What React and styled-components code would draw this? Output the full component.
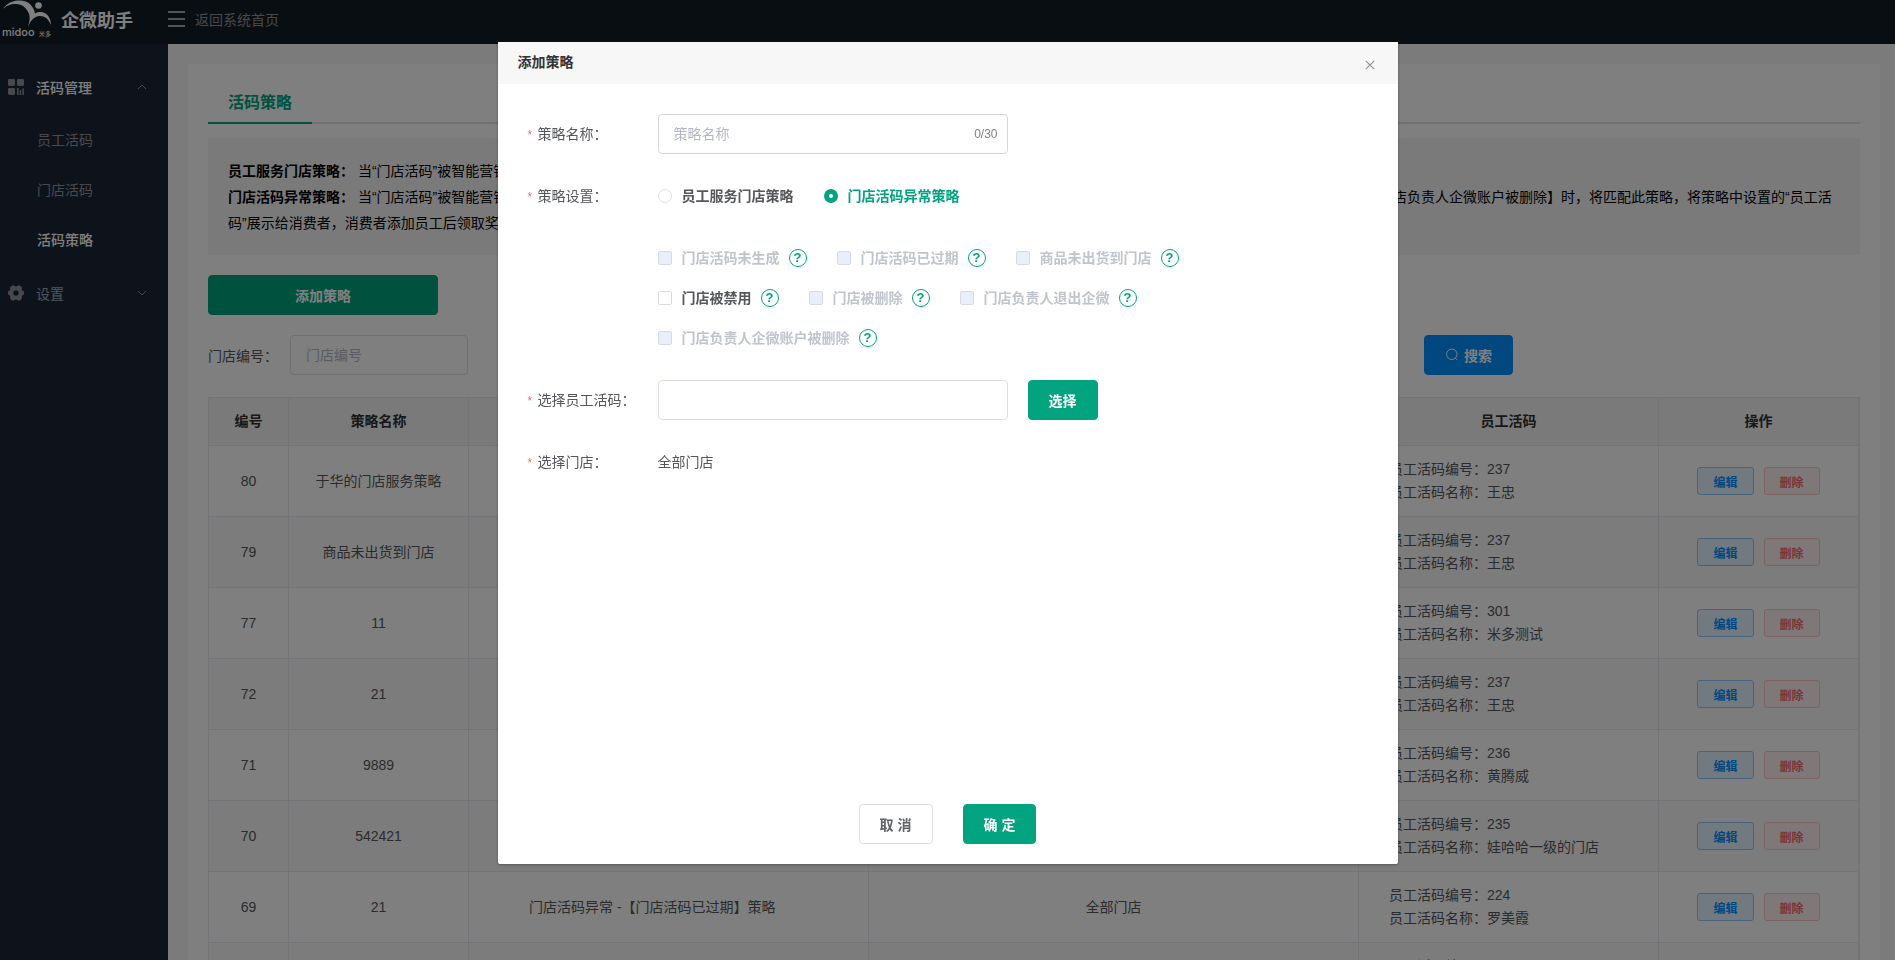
import React, { useState } from "react";
import styled, { createGlobalStyle, css } from "styled-components";

const GREEN = "#02a37f";

const rows = [
  { id: 80, name: "于华的门店服务策略", type: "员工服务门店策略", store: "全部门店", codeId: 237, codeName: "王忠" },
  { id: 79, name: "商品未出货到门店", type: "门店活码异常 -【商品未出货到门店】策略", store: "全部门店", codeId: 237, codeName: "王忠" },
  { id: 77, name: "11", type: "门店活码异常 -【门店被删除】策略", store: "全部门店", codeId: 301, codeName: "米多测试" },
  { id: 72, name: "21", type: "门店活码异常 -【门店活码未生成】策略", store: "全部门店", codeId: 237, codeName: "王忠" },
  { id: 71, name: "9889", type: "员工服务门店策略", store: "全部门店", codeId: 236, codeName: "黄腾威" },
  { id: 70, name: "542421", type: "员工服务门店策略", store: "全部门店", codeId: 235, codeName: "娃哈哈一级的门店" },
  { id: 69, name: "21", type: "门店活码异常 -【门店活码已过期】策略", store: "全部门店", codeId: 224, codeName: "罗美霞" },
  { id: 68, name: "21", type: "员工服务门店策略", store: "全部门店", codeId: 224, codeName: "罗美霞" },
];

const filters = ["门店编号", "门店名称", "策略名称", "员工活码"];

const conditions = [
  [
    { label: "门店活码未生成", disabled: true },
    { label: "门店活码已过期", disabled: true },
    { label: "商品未出货到门店", disabled: true },
  ],
  [
    { label: "门店被禁用", disabled: false },
    { label: "门店被删除", disabled: true },
    { label: "门店负责人退出企微", disabled: true },
  ],
  [{ label: "门店负责人企微账户被删除", disabled: true }],
];

function Logo() {
  return (
    <svg width="50" height="38" viewBox="0 0 50 38" role="img" aria-label="midoo 米多">
      <g fill="#ffffff">
        <path d="M1 9 C5 2.5 12 0 19 0.5 C27 1 32 7 33 13.5 C41 9 49 15 49 25 C46 18 42 15.5 37 16 C31 17 28 22 26 27 C27 23 28.5 19 27 14 C25 8 20 4 14 4 C8 4 4 6 1 9 Z" />
        <circle cx="36.5" cy="5.5" r="3.3" />
        <text x="0" y="36" fontFamily="Inter, sans-serif" fontSize="11" fontWeight="500">midoo</text>
        <text x="37" y="36" fontFamily="Noto Sans CJK SC, sans-serif" fontSize="6">米多</text>
      </g>
    </svg>
  );
}

function GridIcon() {
  return (
    <svg width="16" height="16" viewBox="0 0 16 16" fill="#909399">
      <rect x="0" y="0" width="7" height="7" rx="1.4" />
      <rect x="9" y="0" width="7" height="7" rx="1.4" />
      <rect x="0" y="9" width="7" height="7" rx="1.4" />
      <rect x="9" y="9" width="1.5" height="7" />
      <rect x="11.7" y="11" width="1.5" height="5" />
      <rect x="14.4" y="9.5" width="1.5" height="6.5" />
    </svg>
  );
}

function GearIcon() {
  return (
    <svg width="16" height="16" viewBox="0 0 16 16">
      <path
        fill="#909399"
        fillRule="evenodd"
        d="M4.5 0.4 Q5.5 0 6.2 0.8 Q8 2.4 9.8 0.8 Q10.5 0 11.5 0.4 L13.2 1.4 Q14 2 13.7 3.2 Q13.4 5.8 15.2 6 Q16 6.3 16 7.2 V8.8 Q16 9.7 15.2 10 Q13.4 10.2 13.7 12.8 Q14 14 13.2 14.6 L11.5 15.6 Q10.5 16 9.8 15.2 Q8 13.6 6.2 15.2 Q5.5 16 4.5 15.6 L2.8 14.6 Q2 14 2.3 12.8 Q2.6 10.2 0.8 10 Q0 9.7 0 8.8 V7.2 Q0 6.3 0.8 6 Q2.6 5.8 2.3 3.2 Q2 2 2.8 1.4 Z M8 5.3 A2.7 2.7 0 1 0 8 10.7 A2.7 2.7 0 1 0 8 5.3 Z"
      />
    </svg>
  );
}

function Chevron({ up }) {
  return (
    <svg width="10" height="6" viewBox="0 0 10 6" fill="none" stroke="#909399">
      <path d={up ? "M1 5 L5 1 L9 5" : "M1 1 L5 5 L9 1"} />
    </svg>
  );
}

function SearchIcon() {
  return (
    <svg width="14" height="14" viewBox="0 0 14 14" fill="none" stroke="#ffffff">
      <circle cx="6.8" cy="6.3" r="5.2" />
      <path d="M10.4 10.2 L12.4 12.2" />
    </svg>
  );
}

function CloseIcon() {
  return (
    <svg width="10" height="10" viewBox="0 0 10 10" fill="none" stroke="#909399" strokeWidth="1.2">
      <path d="M0.8 0.8 L9.2 9.2 M9.2 0.8 L0.8 9.2" />
    </svg>
  );
}

function StrategyDialog() {
  const [name, setName] = useState("");
  const [type, setType] = useState("error");

  return (
    <Dialog role="dialog" aria-modal="true" aria-labelledby="dialog-title">
      <DialogHeader>
        <h2 id="dialog-title">添加策略</h2>
        <CloseButton type="button" aria-label="关闭">
          <CloseIcon />
        </CloseButton>
      </DialogHeader>
      <Form>
        <FormItem>
          <FormLabel htmlFor="strategy-name">策略名称：</FormLabel>
          <CountedInput>
            <input
              id="strategy-name"
              placeholder="策略名称"
              maxLength={30}
              value={name}
              onChange={(e) => setName(e.target.value)}
            />
            <span>{name.length}/30</span>
          </CountedInput>
        </FormItem>
        <FormItem>
          <FormLabel as="span">策略设置：</FormLabel>
          <OptionRow>
            <Option $checked={type === "service"}>
              <Radio
                name="type"
                checked={type === "service"}
                onChange={() => setType("service")}
              />
              员工服务门店策略
            </Option>
            <Option $checked={type === "error"}>
              <Radio
                name="type"
                checked={type === "error"}
                onChange={() => setType("error")}
              />
              门店活码异常策略
            </Option>
          </OptionRow>
        </FormItem>
        <FormItem>
          <Conditions>
            {conditions.map((line, i) => (
              <OptionRow key={i}>
                {line.map((item) => (
                  <Condition key={item.label}>
                    <Option $disabled={item.disabled}>
                      <Checkbox disabled={item.disabled} />
                      {item.label}
                    </Option>
                    <Help>?</Help>
                  </Condition>
                ))}
              </OptionRow>
            ))}
          </Conditions>
        </FormItem>
        <FormItem>
          <FormLabel htmlFor="staff-code">选择员工活码：</FormLabel>
          <TextInput id="staff-code" />
          <Button type="button" $primary>选择</Button>
        </FormItem>
        <FormItem>
          <FormLabel as="span">选择门店：</FormLabel>
          <span>全部门店</span>
        </FormItem>
      </Form>
      <DialogFooter>
        <Button type="button">取 消</Button>
        <Button type="button" $primary>确 定</Button>
      </DialogFooter>
    </Dialog>
  );
}

function App() {
  return (
    <Page>
      <GlobalStyle />
      <TopBar>
        <Brand>
          <Logo />
          <strong>企微助手</strong>
        </Brand>
        <BackLink href="#">
          <Burger>
            <i />
            <i />
            <i />
          </Burger>
          返回系统首页
        </BackLink>
      </TopBar>
      <Body>
        <Sidebar>
          <MenuGroup type="button" $active>
            <GridIcon />
            <span>活码管理</span>
            <Chevron up />
          </MenuGroup>
          <MenuItem href="#">员工活码</MenuItem>
          <MenuItem href="#">门店活码</MenuItem>
          <MenuItem href="#" $active>活码策略</MenuItem>
          <MenuGroup type="button">
            <GearIcon />
            <span>设置</span>
            <Chevron />
          </MenuGroup>
        </Sidebar>
        <Main>
          <Card>
            <Tabs>
              <Tab href="#">活码策略</Tab>
            </Tabs>
            <Notice>
              <p>
                <b>员工服务门店策略：</b> 当“门店活码”被智能营销活动引用时，将匹配此策略，将策略中设置的“员工活码”展示给消费者。
              </p>
              <p>
                <b>门店活码异常策略：</b> 当“门店活码”被智能营销活动引用时，如果门店活码出现 【门店活码未生成、门店活码已过期、商品未出货到门店、门店被禁用、门店被删除、门店负责人退出企微、门店负责人企微账户被删除】时，将匹配此策略，将策略中设置的“员工活码”展示给消费者，消费者添加员工后领取奖励。
              </p>
            </Notice>
            <AddButton type="button" $primary>添加策略</AddButton>
            <FilterBar>
              {filters.map((label, i) => (
                <Filter key={label}>
                  <label htmlFor={`filter-${i}`}>{label}：</label>
                  <TextInput id={`filter-${i}`} placeholder={label} />
                </Filter>
              ))}
              <SearchButton type="button">
                <SearchIcon />
                搜索
              </SearchButton>
            </FilterBar>
            <Table>
              <colgroup>
                <col width="80" />
                <col width="180" />
                <col width="400" />
                <col />
                <col width="300" />
                <col width="200" />
              </colgroup>
              <thead>
                <tr>
                  <th>编号</th>
                  <th>策略名称</th>
                  <th>策略类型</th>
                  <th>门店</th>
                  <th>员工活码</th>
                  <th>操作</th>
                </tr>
              </thead>
              <tbody>
                {rows.map((row) => (
                  <tr key={row.id}>
                    <td>{row.id}</td>
                    <td>{row.name}</td>
                    <LeftCell $indent={60}>{row.type}</LeftCell>
                    <td>{row.store}</td>
                    <LeftCell $indent={30}>
                      员工活码编号：{row.codeId}
                      <br />
                      员工活码名称：{row.codeName}
                    </LeftCell>
                    <td>
                      <Actions>
                        <MiniButton type="button">编辑</MiniButton>
                        <MiniButton type="button" $danger>删除</MiniButton>
                      </Actions>
                    </td>
                  </tr>
                ))}
              </tbody>
            </Table>
          </Card>
        </Main>
      </Body>
      <Overlay>
        <StrategyDialog />
      </Overlay>
    </Page>
  );
}

const GlobalStyle = createGlobalStyle`
  * {
    box-sizing: border-box;
  }

  body {
    margin: 0;
    color: #55575b;
    font-size: 14px;
  }

  body, button, input {
    font-family: "Liberation Sans", "Noto Sans CJK SC", sans-serif;
  }

  a {
    text-decoration: none;
  }

  h2, p {
    margin: 0;
  }
`;

const Page = styled.div`
  display: flex;
  flex-direction: column;
  height: 100vh;
  overflow: hidden;
`;

const TopBar = styled.header`
  display: flex;
  flex-shrink: 0;
  height: 44px;
  background: #121d24;
`;

const Brand = styled.div`
  display: flex;
  gap: 9px;
  width: 168px;
  padding-left: 2px;

  strong {
    color: #fff;
    font-size: 18px;
    line-height: 42px;
  }
`;

const BackLink = styled.a`
  display: flex;
  align-items: center;
  gap: 10px;
  height: 38px;
  color: #909399;
`;

const Burger = styled.span`
  display: flex;
  flex-direction: column;
  gap: 5px;

  i {
    width: 17px;
    height: 2px;
    background: #a6a9ad;
  }
`;

const Body = styled.div`
  display: flex;
  flex: 1;
  min-height: 0;
`;

const Sidebar = styled.nav`
  flex-shrink: 0;
  width: 168px;
  padding-top: 15px;
  background: #1c2637;
`;

const MenuGroup = styled.button`
  display: flex;
  align-items: center;
  width: 100%;
  height: 56px;
  padding: 0 21px 0 8px;
  border: none;
  background: none;
  color: ${(props) => (props.$active ? "#fff" : "#a4abb8")};
  font-size: 14px;
  font-weight: ${(props) => (props.$active ? 500 : 400)};
  text-align: left;

  span {
    flex: 1;
    margin-left: 12px;
  }
`;

const MenuItem = styled.a`
  display: block;
  padding-left: 37px;
  color: ${(props) => (props.$active ? "#fff" : "#909399")};
  font-weight: ${(props) => (props.$active ? 500 : 400)};
  line-height: 50px;
`;

const Main = styled.main`
  flex: 1;
  min-width: 0;
  padding: 20px 15px 0 20px;
  background: #f7f7f7;
  overflow: hidden;
`;

const Card = styled.section`
  padding: 20px;
  background: #fff;
`;

const Tabs = styled.div`
  display: flex;
  border-bottom: 2px solid #dfe1ec;
`;

const Tab = styled.a`
  margin-bottom: -2px;
  padding: 0 20px;
  border-bottom: 2px solid ${GREEN};
  color: ${GREEN};
  font-size: 16px;
  font-weight: 700;
  line-height: 38px;
`;

const Notice = styled.div`
  margin: 14px 0 20px;
  padding: 20px 20px 19px;
  background: #f5f5f5;
  color: #000;
  line-height: 26px;

  b {
    font-weight: 700;
  }
`;

const Button = styled.button`
  display: block;
  height: 40px;
  padding: 0 20px;
  border: 1px solid ${(props) => (props.$primary ? GREEN : "#dcdfe6")};
  border-radius: 4px;
  background: ${(props) => (props.$primary ? GREEN : "#fff")};
  color: ${(props) => (props.$primary ? "#fff" : "#606266")};
  font-size: 14px;
  font-weight: 700;
`;

const AddButton = styled(Button)`
  width: 230px;
`;

const TextInput = styled.input`
  width: 350px;
  height: 40px;
  padding: 0 15px;
  border: 1px solid #dcdfe6;
  border-radius: 4px;
  background: #fff;
  color: #606266;
  font-size: 14px;

  &::placeholder {
    color: #b4b8c2;
  }
`;

const FilterBar = styled.div`
  display: flex;
  gap: 44px;
  margin: 20px 0 22px;
`;

const Filter = styled.div`
  display: flex;
  align-items: center;

  label {
    width: 82px;
  }

  ${TextInput} {
    width: 178px;
  }
`;

const SearchButton = styled(Button)`
  display: flex;
  align-items: center;
  gap: 5px;
  border-color: #0090ff;
  background: #0090ff;
  color: #fff;
`;

const Table = styled.table`
  width: 100%;
  border: 1px solid #e6e8f0;
  border-spacing: 0;
  table-layout: fixed;
  text-align: center;

  th,
  td {
    padding: 0 10px;
    border-right: 1px solid #e6e8f0;
    border-bottom: 1px solid #e6e8f0;
    line-height: 23px;
  }

  th {
    height: 48px;
    background: #f5f5f5;
    color: #303133;
    font-weight: 700;
  }

  td {
    height: 71px;
  }

  tbody tr:nth-child(even) {
    background: #f8f8f8;
  }
`;

const LeftCell = styled.td`
  && {
    padding-left: ${(props) => props.$indent}px;
    text-align: left;
  }
`;

const Actions = styled.div`
  display: flex;
  justify-content: center;
  gap: 10px;
`;

const MiniButton = styled.button`
  height: 28px;
  padding: 0 15px;
  border: 1px solid ${(props) => (props.$danger ? "#fbc4c4" : "#8cc8ff")};
  border-radius: 3px;
  background: ${(props) => (props.$danger ? "#fef0f0" : "#e6f4ff")};
  color: ${(props) => (props.$danger ? "#f56c6c" : "#0090ff")};
  font-size: 12px;
  font-weight: 700;
`;

const Overlay = styled.div`
  position: fixed;
  inset: 0;
  display: flex;
  justify-content: center;
  align-items: flex-start;
  padding-top: 42px;
  background: rgba(0, 0, 0, 0.5);
`;

const Dialog = styled.div`
  width: 900px;
  border-radius: 2px;
  background: #fff;
  box-shadow: 0 1px 3px rgba(0, 0, 0, 0.3);
`;

const DialogHeader = styled.div`
  display: flex;
  justify-content: space-between;
  height: 42px;
  padding: 0 20px;
  background: #f7f7f7;

  h2 {
    color: #333;
    font-size: 14px;
    font-weight: 700;
    line-height: 40px;
  }
`;

const CloseButton = styled.button`
  display: flex;
  padding: 18px 3px 0;
  border: none;
  background: none;
`;

const Form = styled.form`
  display: flex;
  flex-direction: column;
  gap: 22px;
  min-height: 700px;
  padding: 30px;
`;

const FormItem = styled.div`
  display: flex;
  align-items: center;
  min-height: 40px;
  line-height: 38px;

  ${Button} {
    margin-left: 20px;
  }
`;

const FormLabel = styled.label`
  width: 130px;

  &::before {
    content: "*";
    display: inline-block;
    width: 10px;
    color: #f56c6c;
    font-size: 12px;
  }
`;

const CountedInput = styled.div`
  display: flex;
  align-items: center;
  width: 350px;
  height: 40px;
  padding: 0 9px 0 15px;
  border: 1px solid #d3d6e2;
  border-radius: 4px;

  input {
    flex: 1;
    min-width: 0;
    padding: 0;
    border: none;
    outline: none;
    font-size: 14px;
  }

  input::placeholder {
    color: #b4b8c2;
  }

  span {
    color: #7d8086;
    font-size: 12px;
  }
`;

const OptionRow = styled.div`
  display: flex;
  align-items: center;
  gap: 30px;
  height: 40px;
`;

const Conditions = styled.div`
  margin-left: 130px;
`;

const Condition = styled.div`
  display: flex;
  align-items: center;
  gap: 9px;
`;

const Option = styled.label`
  display: flex;
  align-items: center;
  gap: 10px;
  font-weight: 700;
  ${(props) => props.$checked && css`color: ${GREEN};`}
  ${(props) => props.$disabled && css`color: #c0c4cc;`}
`;

const Radio = styled.input.attrs({ type: "radio" })`
  appearance: none;
  width: 14px;
  height: 14px;
  margin: 0;
  border: 1px solid #dcdfe6;
  border-radius: 50%;
  background: #fff;

  &:checked {
    border: 5px solid ${GREEN};
  }
`;

const Checkbox = styled.input.attrs({ type: "checkbox" })`
  appearance: none;
  width: 14px;
  height: 14px;
  margin: 0;
  border: 1px solid #d8dbe6;
  border-radius: 2px;
  background: #fff;

  &:disabled {
    background: #e8effb;
  }
`;

const Help = styled.span`
  width: 18px;
  height: 18px;
  border: 1px solid ${GREEN};
  border-radius: 50%;
  color: ${GREEN};
  font-size: 13px;
  font-weight: 700;
  line-height: 16px;
  text-align: center;
`;

const DialogFooter = styled.div`
  display: flex;
  justify-content: center;
  gap: 30px;
  padding: 20px;
`;

export default App;
